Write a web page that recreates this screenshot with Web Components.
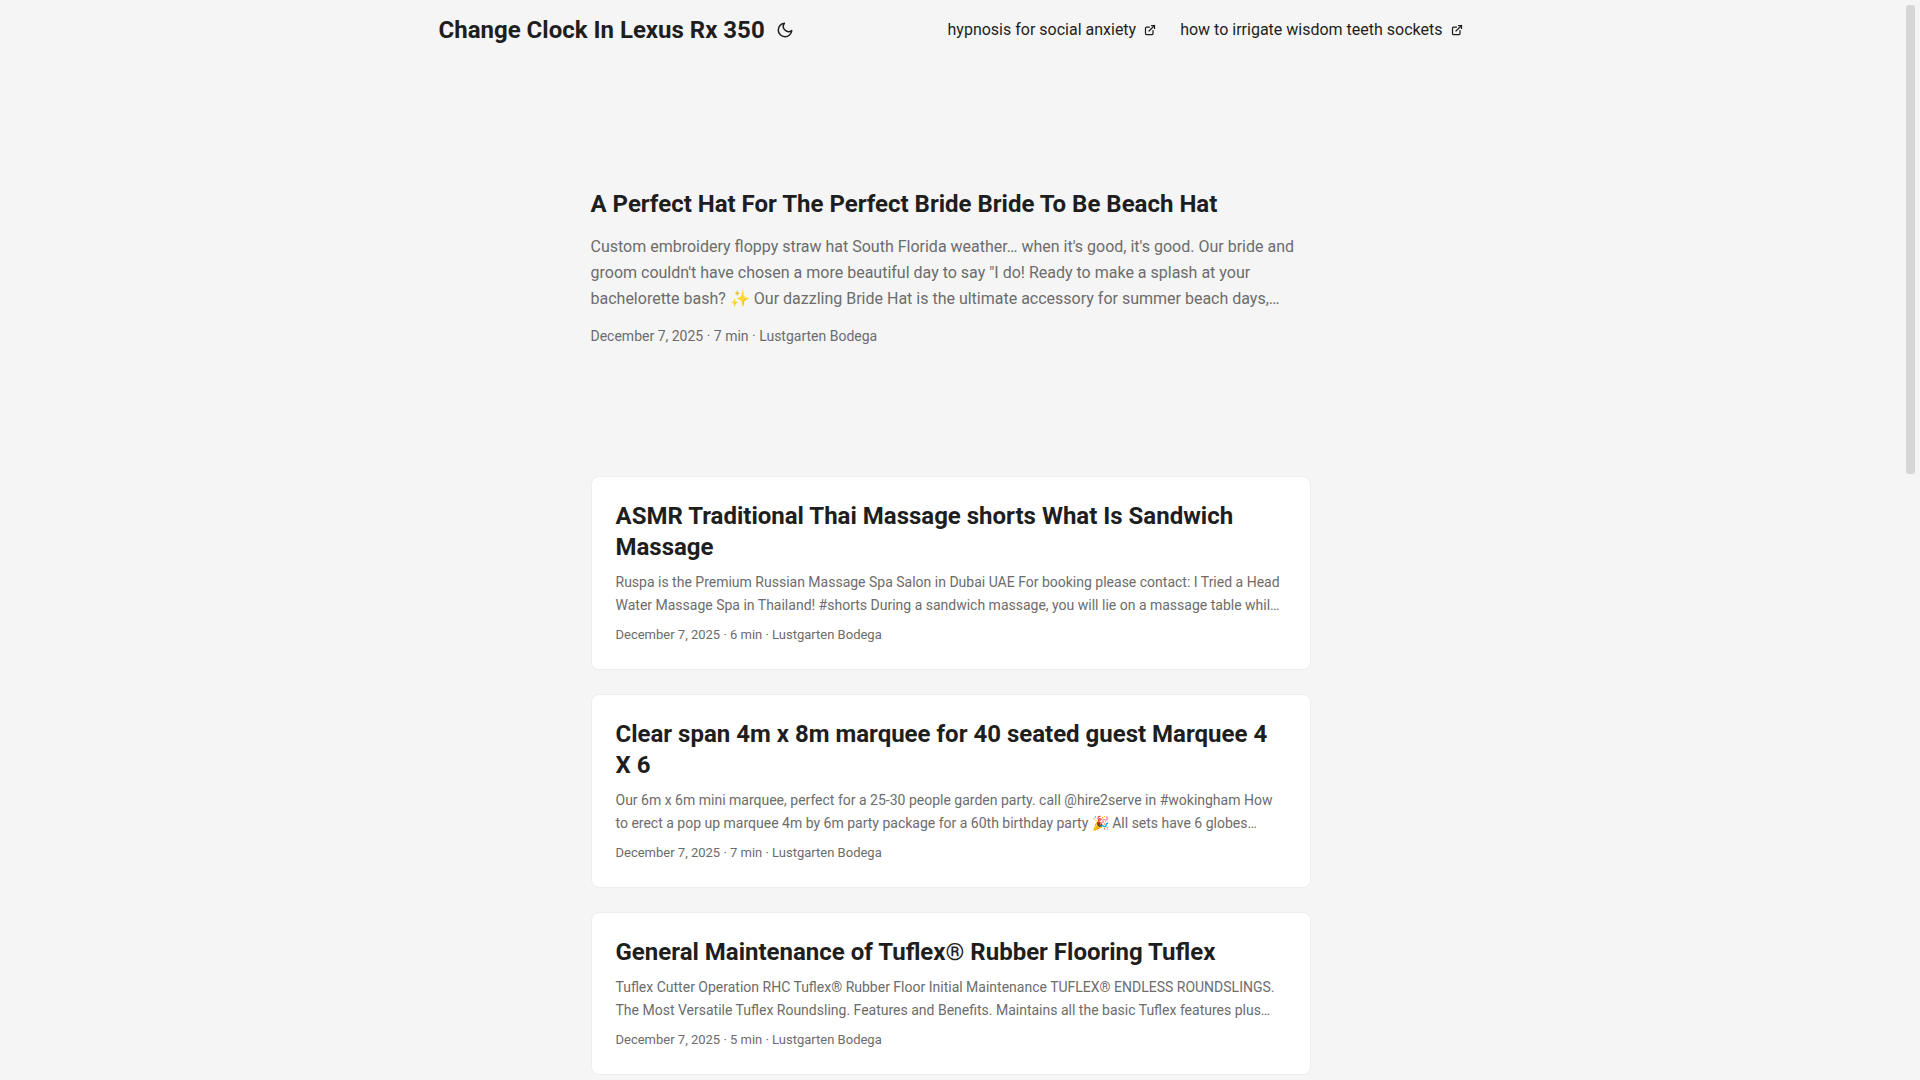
<!DOCTYPE html>
<html lang="en">
<head>
<meta charset="utf-8">
<meta name="viewport" content="width=device-width, initial-scale=1">
<title>Change Clock In Lexus Rx 350</title>
<style>
:root{
    --gap: 24px;
    --nav-width: 1024px;
    --main-width: 720px;
    --header-height: 60px;
    --radius: 8px;
    --theme: #f5f5f5;
    --entry: #ffffff;
    --primary: rgb(30, 30, 30);
    --secondary: rgb(108, 108, 108);
    --tertiary: rgb(214, 214, 214);
    --border: rgb(238, 238, 238);
}
body{
    margin: 0;
    background: var(--theme);
    color: var(--primary);
    font-family: Roboto, "Noto Sans", sans-serif;
    font-size: 16px;
    line-height: 26px;
}
</style>
</head>
<body>
<blog-page>
    <site-header slot="header" name="Change Clock In Lexus Rx 350">
        <nav-link href="#hypnosis">hypnosis for social anxiety</nav-link>
        <nav-link href="#wisdom">how to irrigate wisdom teeth sockets</nav-link>
    </site-header>

    <first-entry href="#bride-hat">
        <span slot="title">A Perfect Hat For The Perfect Bride Bride To Be Beach Hat</span>
        <span slot="summary">Custom embroidery floppy straw hat South Florida weather… when it's good, it's good. Our bride and groom couldn't have chosen a more beautiful day to say "I do! Ready to make a splash at your bachelorette bash? ✨ Our dazzling Bride Hat is the ultimate accessory for summer beach days,…</span>
        <span slot="meta">December 7, 2025 · 7 min · Lustgarten Bodega</span>
    </first-entry>

    <post-entry href="#massage">
        <span slot="title">ASMR Traditional Thai Massage shorts What Is Sandwich Massage</span>
        <span slot="summary">Ruspa is the Premium Russian Massage Spa Salon in Dubai UAE For booking please contact: I Tried a Head Water Massage Spa in Thailand! #shorts During a sandwich massage, you will lie on a massage table whil…</span>
        <span slot="meta">December 7, 2025 · 6 min · Lustgarten Bodega</span>
    </post-entry>

    <post-entry href="#marquee">
        <span slot="title">Clear span 4m x 8m marquee for 40 seated guest Marquee 4 X 6</span>
        <span slot="summary">Our 6m x 6m mini marquee, perfect for a 25-30 people garden party. call @hire2serve in #wokingham How to erect a pop up marquee 4m by 6m party package for a 60th birthday party 🎉 All sets have 6 globes…</span>
        <span slot="meta">December 7, 2025 · 7 min · Lustgarten Bodega</span>
    </post-entry>

    <post-entry href="#tuflex">
        <span slot="title">General Maintenance of Tuflex® Rubber Flooring Tuflex</span>
        <span slot="summary">Tuflex Cutter Operation RHC Tuflex® Rubber Floor Initial Maintenance TUFLEX® ENDLESS ROUNDSLINGS. The Most Versatile Tuflex Roundsling. Features and Benefits. Maintains all the basic Tuflex features plus…</span>
        <span slot="meta">December 7, 2025 · 5 min · Lustgarten Bodega</span>
    </post-entry>
</blog-page>

<script>
class BaseElement extends HTMLElement{
    constructor(){
        super()
        this.attachShadow({mode: "open"})
    }
    connectedCallback(){
        const template = document.createElement("template")
        template.innerHTML = this.getStyles() + this.getTemplate()
        this.shadowRoot.replaceChildren(template.content.cloneNode(true))
    }
}

class BlogPage extends BaseElement{
    getTemplate(){
        return `
        <div class="content">
            <slot name="header"></slot>
            <main><slot></slot></main>
        </div>
        <scroll-rail></scroll-rail>
        `
    }
    getStyles(){
        return `
        <style>
        :host{
            display: grid;
            grid-template-columns: minmax(0, 1fr) auto;
        }
        main{
            display: flex;
            flex-direction: column;
            gap: var(--gap);
            box-sizing: border-box;
            max-width: calc(var(--main-width) + var(--gap) * 2);
            margin: 0 auto;
            padding: var(--gap);
        }
        </style>
        `
    }
}

class ScrollRail extends BaseElement{
    getTemplate(){
        return `<div></div>`
    }
    getStyles(){
        return `
        <style>
        :host{
            display: block;
            position: sticky;
            top: 0;
            box-sizing: border-box;
            width: 19px;
            height: 100vh;
            padding: 5px;
        }
        div{
            height: 43.8%;
            border-radius: 3px;
            background: var(--tertiary);
        }
        </style>
        `
    }
}

class SiteHeader extends BaseElement{
    getTemplate(){
        return `
        <header>
            <div class="logo">
                <a href="#home">${this.getAttribute("name")}</a>
                <button type="button" aria-label="Toggle theme">
                    <svg width="24" height="18" viewBox="0 0 24 24" fill="none" stroke="currentColor" stroke-width="2" stroke-linecap="round" stroke-linejoin="round">
                        <path d="M21 12.79A9 9 0 1 1 11.21 3 7 7 0 0 0 21 12.79z"/>
                    </svg>
                </button>
            </div>
            <nav><slot></slot></nav>
        </header>
        `
    }
    getStyles(){
        return `
        <style>
        :host{
            display: block;
        }
        header{
            display: flex;
            flex-wrap: wrap;
            justify-content: space-between;
            box-sizing: border-box;
            max-width: calc(var(--nav-width) + var(--gap) * 2);
            margin: 0 auto;
            padding: 0 var(--gap);
            line-height: var(--header-height);
        }
        .logo{
            display: flex;
            align-items: center;
            gap: 8px;
        }
        .logo a{
            color: inherit;
            font-size: 24px;
            font-weight: 700;
            text-decoration: none;
        }
        button{
            display: flex;
            padding: 0;
            border: none;
            background: none;
            color: inherit;
            cursor: pointer;
        }
        nav{
            display: flex;
            flex-wrap: wrap;
            gap: 0 var(--gap);
        }
        </style>
        `
    }
}

class NavLink extends BaseElement{
    getTemplate(){
        return `
        <a href="${this.getAttribute("href")}">
            <slot></slot>
            <svg width="12" height="12" viewBox="0 0 24 24" fill="none" stroke="currentColor" stroke-width="2.5" stroke-linecap="round" stroke-linejoin="round">
                <path d="M18 13v6a2 2 0 0 1-2 2H5a2 2 0 0 1-2-2V8a2 2 0 0 1 2-2h6"/>
                <path d="M15 3h6v6"/>
                <path d="M10 14L21 3"/>
            </svg>
        </a>
        `
    }
    getStyles(){
        return `
        <style>
        :host{
            display: block;
        }
        a{
            display: flex;
            align-items: center;
            gap: 8px;
            color: inherit;
            text-decoration: none;
        }
        </style>
        `
    }
}

class PostEntry extends BaseElement{
    getTemplate(){
        return `
        <article>
            <h2><a href="${this.getAttribute("href")}"><slot name="title"></slot></a></h2>
            <p><slot name="summary"></slot></p>
            <footer><slot name="meta"></slot></footer>
        </article>
        `
    }
    getStyles(){
        return `
        <style>
        :host{
            display: block;
        }
        article{
            padding: var(--gap);
            border: 1px solid var(--border);
            border-radius: var(--radius);
            background: var(--entry);
        }
        h2{
            margin: 0;
            font-size: 24px;
            font-weight: 700;
            line-height: 31px;
        }
        a{
            color: inherit;
            text-decoration: none;
        }
        p{
            margin: 8px 0;
            color: var(--secondary);
            font-size: 14px;
            line-height: 23px;
        }
        footer{
            color: var(--secondary);
            font-size: 13px;
            line-height: 20px;
        }
        </style>
        `
    }
}

// same markup as a post, without the card and with larger text
class FirstEntry extends PostEntry{
    getStyles(){
        return super.getStyles() + `
        <style>
        article{
            display: flex;
            flex-direction: column;
            justify-content: center;
            min-height: 320px;
            margin: var(--gap) 0;
            padding: 0;
            border: none;
            background: none;
        }
        p{
            margin: 14px 0;
            font-size: 16px;
            line-height: 26px;
        }
        footer{
            font-size: 14px;
            line-height: 21px;
        }
        </style>
        `
    }
}

customElements.define("blog-page", BlogPage)
customElements.define("scroll-rail", ScrollRail)
customElements.define("site-header", SiteHeader)
customElements.define("nav-link", NavLink)
customElements.define("post-entry", PostEntry)
customElements.define("first-entry", FirstEntry)
</script>
</body>
</html>
